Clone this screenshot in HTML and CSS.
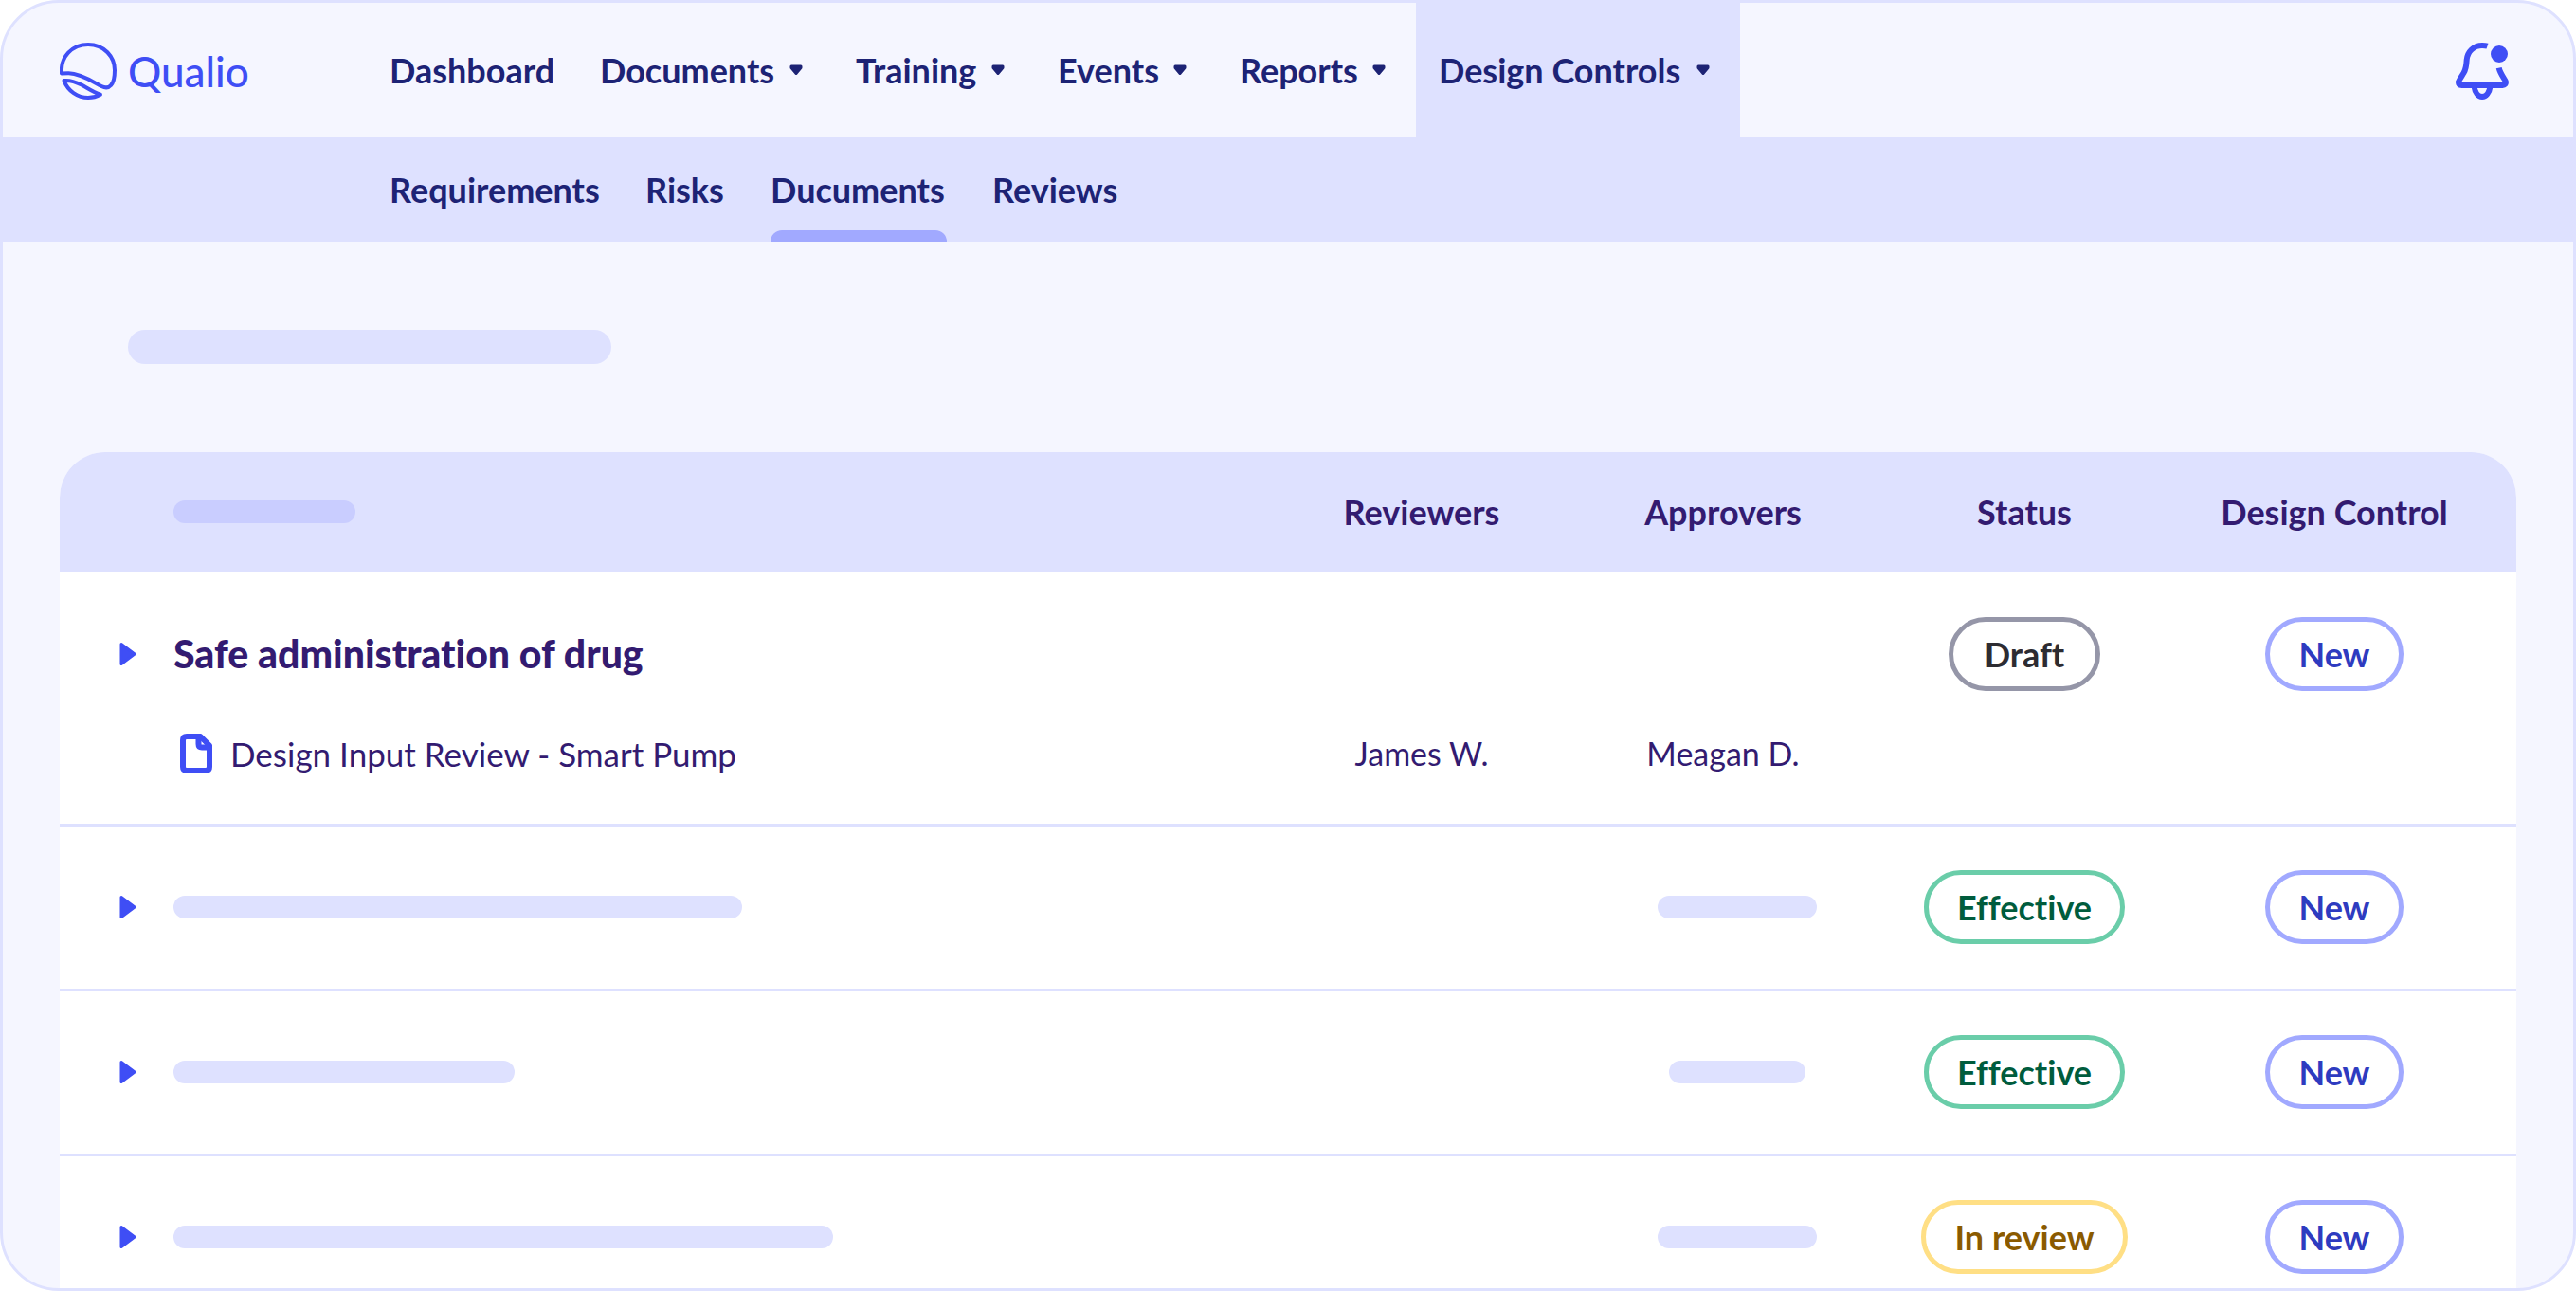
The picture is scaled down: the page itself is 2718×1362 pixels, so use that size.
FILE: index.html
```html
<!DOCTYPE html>
<html lang="en">
<head>
<meta charset="utf-8">
<title>Qualio</title>
<link rel="stylesheet" href="styles.css">
</head>
<body>
<svg class="defs" aria-hidden="true">
  <symbol id="caret" viewBox="0 0 14 12"><path d="M2 2H12L12 3.5L7 9.5L2 3.5Z" fill="currentColor" stroke="currentColor" stroke-width="3" stroke-linejoin="round"/></symbol>
  <symbol id="expand" viewBox="0 0 18 26"><path d="M2 2.5L16 13L2 23.500Z" fill="currentColor" stroke="currentColor" stroke-width="3" stroke-linejoin="round"/></symbol>
</svg>
<div class="app">
  <header class="topbar">
    <a class="brand" href="#">
      <svg class="brand-mark" viewBox="0 0 60 60" aria-hidden="true">
        <path d="M2 32.500C0.500 15 13 2 30 2C47 2 58 15 58 29C58 37 57 42 54 45C51.500 48 48 48 44 46C37 42.500 22 32 9 32.300Z"/>
        <path d="M4.500 40C9 39.500 15 40.500 23 44.500C31 49 36 52.500 43 54.700C38 57.500 34 58 30 58C19 58 8.500 51 4.500 40Z"/>
      </svg>
      <span>Qualio</span>
    </a>
    <nav class="main-nav" aria-label="Main">
      <a href="#">Dashboard</a>
      <button type="button">Documents <svg class="caret"><use href="#caret"/></svg></button>
      <button type="button">Training <svg class="caret"><use href="#caret"/></svg></button>
      <button type="button">Events <svg class="caret"><use href="#caret"/></svg></button>
      <button type="button">Reports <svg class="caret"><use href="#caret"/></svg></button>
      <button type="button" class="active">Design Controls <svg class="caret"><use href="#caret"/></svg></button>
    </nav>
    <button class="bell" type="button" aria-label="Notifications">
      <svg viewBox="0 0 56 60" aria-hidden="true">
        <path d="M33.500 3.700C31.500 3 29.500 3 28 3C19 3 12.500 9.500 11.700 18C11.400 24 11 28 8.500 32C6 36 3.500 39.500 3.200 41C2.600 43.500 4 45 6.500 45H49.500C52 45 53.300 43.500 52.800 41C52.300 39 47 33 45.700 26.700"/>
        <path d="M19.500 46C20.500 53 24 57 28 57C32 57 35.500 53 36.500 46"/>
        <circle cx="46" cy="12" r="9"/>
      </svg>
    </button>
  </header>
  <nav class="sub-nav" aria-label="Design Controls">
    <a href="#">Requirements</a>
    <a href="#">Risks</a>
    <a href="#" class="current">Ducuments</a>
    <a href="#">Reviews</a>
  </nav>
  <main class="content">
    <div class="bar bar-title"></div>
    <table class="docs">
      <colgroup><col><col class="c-people"><col class="c-people"><col class="c-people"><col class="c-control"></colgroup>
      <thead>
        <tr>
          <th><div class="bar bar-head"></div></th>
          <th>Reviewers</th>
          <th>Approvers</th>
          <th>Status</th>
          <th>Design Control</th>
        </tr>
      </thead>
      <tbody>
        <tr class="open">
          <td><div class="name"><button type="button" aria-label="Expand"><svg class="expand"><use href="#expand"/></svg></button><strong>Safe administration of drug</strong></div></td>
          <td></td>
          <td></td>
          <td><span class="pill draft">Draft</span></td>
          <td><span class="pill new">New</span></td>
        </tr>
        <tr class="child">
          <td>
            <a class="file" href="#">
              <svg viewBox="0 0 34 42" aria-hidden="true"><path d="M21.500 3H7Q3 3 3 7V35Q3 39 7 39H27Q31 39 31 35V12.500Z"/><path d="M19.500 4V11Q19.500 14.500 23 14.500H31"/></svg>
              <span>Design Input Review - Smart Pump</span>
            </a>
          </td>
          <td>James W.</td>
          <td>Meagan D.</td>
          <td></td>
          <td></td>
        </tr>
        <tr>
          <td><div class="name"><button type="button" aria-label="Expand"><svg class="expand"><use href="#expand"/></svg></button><div class="bar w600"></div></div></td>
          <td></td>
          <td class="loading"><div class="bar w168"></div></td>
          <td><span class="pill effective">Effective</span></td>
          <td><span class="pill new">New</span></td>
        </tr>
        <tr>
          <td><div class="name"><button type="button" aria-label="Expand"><svg class="expand"><use href="#expand"/></svg></button><div class="bar w360"></div></div></td>
          <td></td>
          <td class="loading"><div class="bar w144"></div></td>
          <td><span class="pill effective">Effective</span></td>
          <td><span class="pill new">New</span></td>
        </tr>
        <tr>
          <td><div class="name"><button type="button" aria-label="Expand"><svg class="expand"><use href="#expand"/></svg></button><div class="bar w696"></div></div></td>
          <td></td>
          <td class="loading"><div class="bar w168"></div></td>
          <td><span class="pill review">In review</span></td>
          <td><span class="pill new">New</span></td>
        </tr>
      </tbody>
    </table>
  </main>
</div>
</body>
</html>
```
FILE: styles.css
```css
:root {
  --line: #dee1ff;
  --surface: #f5f6ff;
  --brand: #3f4ef5;
  --navy: #1d2375;
  --ink: #331b71;
}

* { box-sizing: border-box; }

body {
  margin: 0;
  background: #fff;
  font: 700 36px/48px Lato, "Liberation Sans", sans-serif;
  font-variant-ligatures: no-common-ligatures;
  color: var(--navy);
}

a { color: inherit; text-decoration: none; }

button {
  padding: 0;
  border: 0;
  background: none;
  font: inherit;
  color: inherit;
  cursor: pointer;
}

svg { display: block; flex: none; }

.defs { position: absolute; width: 0; height: 0; }

.app {
  height: 100vh;
  overflow: hidden;
  border: 3px solid var(--line);
  border-radius: 62px;
  background: var(--surface);
}

/* Top bar */
.topbar {
  display: flex;
  height: 142px;
  padding: 0 68px 0 60px;
}

.brand {
  display: flex;
  align-items: center;
  gap: 12px;
  width: 324px;
  padding-top: 2px;
  font-size: 44px;
  font-weight: 500;
  color: var(--brand);
}

.brand-mark {
  width: 60px;
  height: 60px;
  fill: none;
  stroke: currentColor;
  stroke-width: 4;
  stroke-linejoin: round;
}

.main-nav {
  display: grid;
  grid-template-columns: 222px 270px 213px 192px 210px 342px;
}

.main-nav > * {
  display: flex;
  align-items: center;
  justify-content: space-between;
  padding: 0 32px 0 24px;
}

.main-nav > a { padding-right: 0; }

.main-nav .active { background: var(--line); }

.caret { width: 14px; height: 12px; }

.bell { margin-left: auto; padding-top: 2px; color: var(--brand); }

.bell svg { width: 56px; height: 60px; }

.bell path { fill: none; stroke: currentColor; stroke-width: 6; }

.bell circle { fill: currentColor; }

/* Section tabs */
.sub-nav {
  display: grid;
  grid-template-columns: 222px 84px 186px 130px;
  column-gap: 48px;
  height: 110px;
  padding-left: 408px;
  background: var(--line);
}

.sub-nav a {
  display: flex;
  flex-direction: column;
  justify-content: space-between;
  padding-top: 31px;
}

.sub-nav .current::after {
  content: "";
  height: 12px;
  border-radius: 12px 12px 0 0;
  background: #a1a9ff;
}

/* Placeholder bars */
.bar {
  height: 24px;
  border-radius: 12px;
  background: var(--line);
}

.bar-title { width: 510px; height: 36px; margin-left: 72px; border-radius: 18px; }
.bar-head { width: 192px; margin-left: 120px; background: #c9cdff; }
.w600 { width: 600px; }
.w360 { width: 360px; }
.w696 { width: 696px; }
.w168 { width: 168px; }
.w144 { width: 144px; }

/* Documents table */
.content { padding: 93px 60px 0; }

.docs {
  width: 100%;
  margin-top: 93px;
  border-collapse: separate;
  border-spacing: 0;
  table-layout: fixed;
  border-radius: 48px 48px 0 0;
  overflow: hidden;
  background: #fff;
  color: var(--ink);
}

.c-people { width: 318px; }
.c-control { width: 360px; }

.docs th { height: 126px; padding: 0; background: var(--line); }

.docs td {
  padding: 46px 0 47px;
  border-bottom: 3px solid var(--line);
  text-align: center;
}

.docs .open td { padding: 48px 0 24px; border-bottom: 0; }

.docs .child td {
  padding-top: 18px;
  padding-bottom: 50px;
  font-size: 34px;
  font-weight: 400;
}

.docs th:last-child,
.docs tr td:last-child,
.docs .open td:last-child { padding-right: 24px; }

.docs .loading { padding-left: 30px; }
.loading .bar { margin: 0 auto; }

.name {
  display: flex;
  align-items: center;
  gap: 39px;
  padding-left: 63px;
}

.name button { color: var(--brand); }
.name strong { font-size: 41px; }

.expand { width: 18px; height: 26px; }

.file {
  display: flex;
  align-items: center;
  gap: 19px;
  padding-left: 127px;
  font-size: 35px;
}

.file svg {
  width: 34px;
  height: 42px;
  fill: none;
  stroke: var(--brand);
  stroke-width: 6;
  stroke-linejoin: round;
}

.pill {
  display: inline-block;
  min-width: 144px;
  padding: 10px 30px;
  border: 5px solid;
  border-radius: 39px;
  vertical-align: top;
}

.draft { min-width: 160px; color: #2d2c32; border-color: #9596a8; }
.new { color: #2e3bc0; border-color: #a1a9ff; }
.effective { color: #005c3d; border-color: #6acda9; }
.review { color: #8a5a00; border-color: #ffdf85; }
```
